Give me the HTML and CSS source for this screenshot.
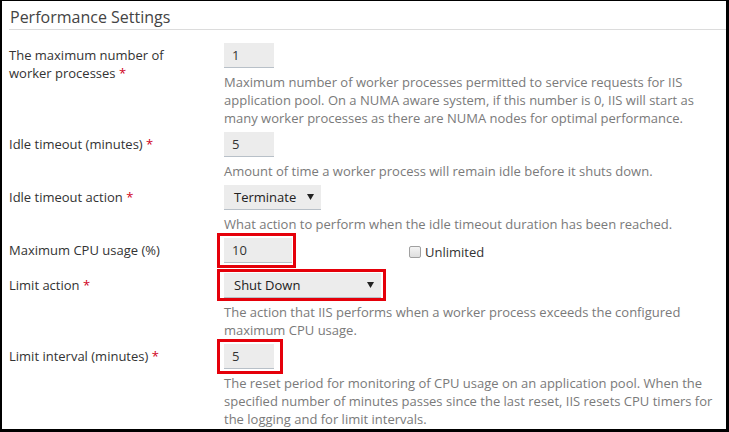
FILE: index.html
```html
<!DOCTYPE html>
<html lang="en">
<head>
<meta charset="utf-8">
<title>Performance Settings</title>
<link rel="stylesheet" href="styles.css">
</head>
<body>
<div class="frame">
  <h2 class="title">Performance Settings</h2>
  <div class="form">
    <div class="row">
      <div class="label">The maximum number of worker processes <span class="req">*</span></div>
      <div class="field">
        <div class="control"><input class="input w50" type="text" value="1"></div>
        <p class="help">Maximum number of worker processes permitted to service requests for IIS application pool. On a NUMA aware system, if this number is 0, IIS will start as many worker processes as there are NUMA nodes for optimal performance.</p>
      </div>
    </div>
    <div class="row">
      <div class="label">Idle timeout (minutes) <span class="req">*</span></div>
      <div class="field">
        <div class="control"><input class="input w50" type="text" value="5"></div>
        <p class="help">Amount of time a worker process will remain idle before it shuts down.</p>
      </div>
    </div>
    <div class="row">
      <div class="label">Idle timeout action <span class="req">*</span></div>
      <div class="field">
        <div class="control">
          <div class="select w97"><span>Terminate</span><svg class="caret" width="7" height="6" viewBox="0 0 7 6"><path d="M0 0H7L3.5 6Z" fill="#222"/></svg></div>
        </div>
        <p class="help">What action to perform when the idle timeout duration has been reached.</p>
      </div>
    </div>
    <div class="row">
      <div class="label">Maximum CPU usage (%)</div>
      <div class="field">
        <div class="control">
          <span class="mark mark-cpu"><input class="input w68" type="text" value="10"></span>
          <label class="check"><span class="box"></span><span>Unlimited</span></label>
        </div>
        <p class="help empty"></p>
      </div>
    </div>
    <div class="row">
      <div class="label">Limit action <span class="req">*</span></div>
      <div class="field">
        <div class="control">
          <span class="mark mark-action"><div class="select w157"><span>Shut Down</span><svg class="caret" width="7" height="6" viewBox="0 0 7 6"><path d="M0 0H7L3.5 6Z" fill="#222"/></svg></div></span>
        </div>
        <p class="help">The action that IIS performs when a worker process exceeds the configured maximum CPU usage.</p>
      </div>
    </div>
    <div class="row">
      <div class="label">Limit interval (minutes) <span class="req">*</span></div>
      <div class="field">
        <div class="control"><span class="mark mark-interval"><input class="input w50" type="text" value="5"></span></div>
        <p class="help">The reset period for monitoring of CPU usage on an application pool. When the specified number of minutes passes since the last reset, IIS resets CPU timers for the logging and for limit intervals.</p>
      </div>
    </div>
  </div>
</div>
</body>
</html>
```

FILE: styles.css
```css
html, body {
  margin: 0;
  padding: 0;
  background: #fff;
}
body {
  font-family: "Open Sans", "Noto Sans", "DejaVu Sans", sans-serif;
  font-size: 13px;
  color: #333;
}
.frame {
  box-sizing: border-box;
  width: 729px;
  height: 432px;
  border-style: solid;
  border-color: #000;
  border-width: 1px 3px 3px 2px;
  overflow: hidden;
  background: #fff;
}
.title {
  margin: 0 0 0 7px;
  padding: 4px 0 0 1px;
  font-size: 16px;
  font-weight: 400;
  line-height: 24px;
  color: #444;
  border-bottom: 1px solid #dcdcdc;
}
.form {
  padding: 13px 0 0 7px;
}
.row {
  display: flex;
  margin-bottom: 5px;
}
.label {
  box-sizing: border-box;
  width: 215px;
  flex: none;
  padding: 3px 40px 0 0;
  line-height: 18px;
  color: #333;
}
.label .req {
  color: #d0021b;
}
.field {
  flex: 1;
  min-width: 0;
  padding-right: 8px;
}
.control {
  display: flex;
  align-items: center;
  height: 25px;
}
.input {
  box-sizing: border-box;
  height: 25px;
  margin: 0;
  padding: 0 8px;
  border: none;
  border-bottom: 1px solid #b8c0c8;
  background: #ececec;
  font-family: inherit;
  font-size: 13px;
  color: #333;
  outline: none;
}
.w50 { width: 50px; }
.w68 { width: 68px; }
.w97 { width: 97px; }
.w157 { width: 157px; }
.select {
  box-sizing: border-box;
  height: 25px;
  display: flex;
  align-items: center;
  justify-content: space-between;
  padding: 0 7px 0 10px;
  background: #ececec;
  border-bottom: 1px solid #b8c0c8;
  color: #222;
}
.caret {
  display: block;
  flex: none;
}
.mark {
  position: relative;
  display: block;
}
.mark::after {
  content: "";
  position: absolute;
  border: 3px solid #e5000a;
  pointer-events: none;
}
.mark-cpu::after { left: -7px; right: -4px; top: -5px; bottom: -5px; }
.mark-action::after { left: -7px; right: -5px; top: -4px; bottom: -3px; }
.mark-interval::after { left: -7px; right: -9px; top: -5px; bottom: -5px; }
.check {
  display: flex;
  align-items: center;
  margin-left: 117px;
  margin-top: 2px;
  color: #333;
}
.box {
  box-sizing: border-box;
  width: 12px;
  height: 12px;
  margin-right: 4px;
  border: 1px solid #a0a0a0;
  border-radius: 2px;
  background: linear-gradient(#f4f4f4, #dedede);
}
.help {
  margin: 5px 0 0;
  line-height: 18px;
  color: #7a7a7a;
}
.help.empty {
  margin: 5px 0 0;
  height: 0;
}
```
